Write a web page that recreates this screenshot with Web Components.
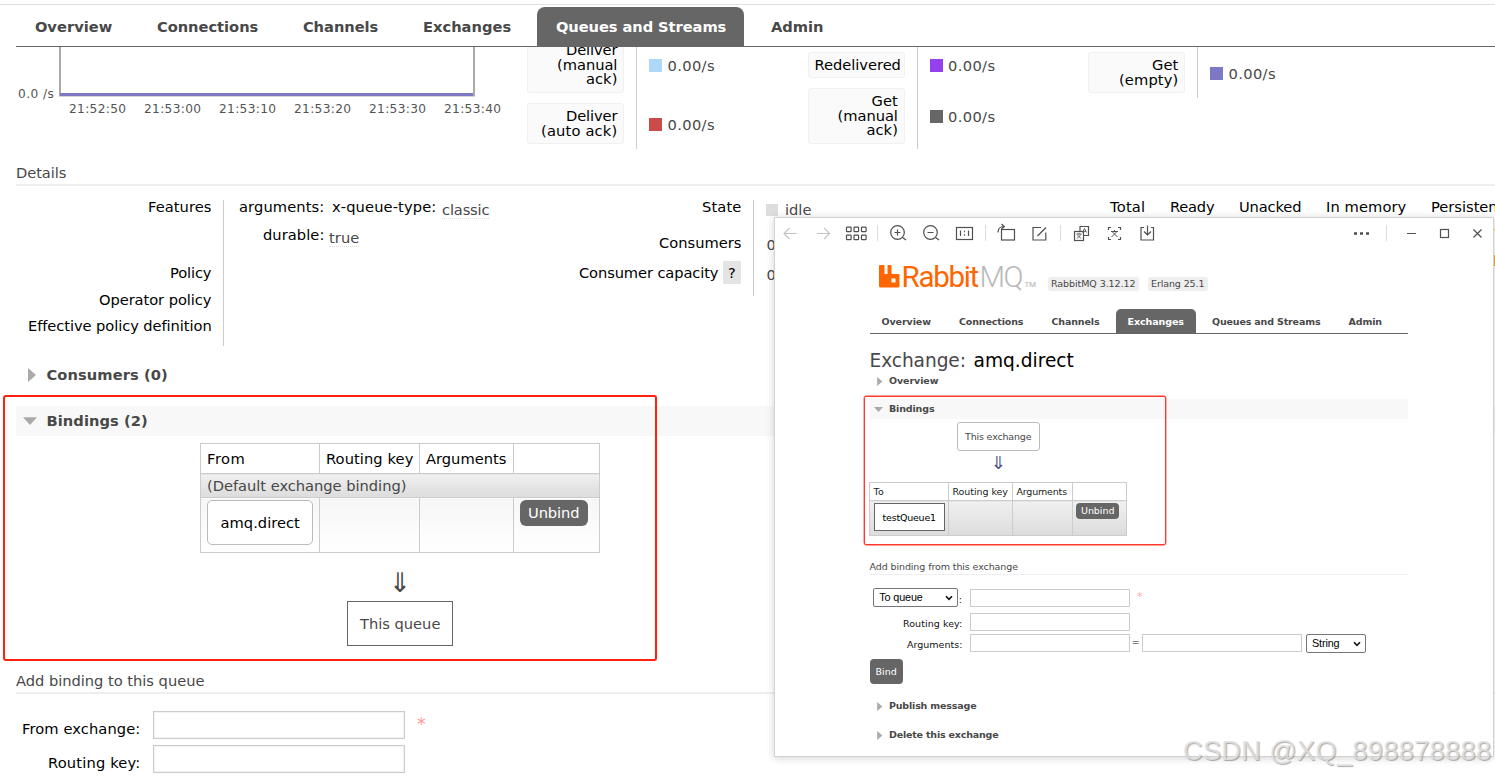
<!DOCTYPE html>
<html lang="en">
<head>
<meta charset="utf-8">
<title>RabbitMQ Management</title>
<style>
    html, body {
        margin: 0;
        height: 777px;
        overflow: hidden;
        background: #fff;
    }

    body {
        position: relative;
        font-family: "DejaVu Sans", Verdana, sans-serif;
        color: #484848;
    }
</style>
</head>
<body>
<queue-page></queue-page>
<image-viewer></image-viewer>
<water-mark></water-mark>

<script>
class BaseElement extends HTMLElement {

    constructor() {
        super();

        this.attachShadow({mode: 'open'});
    }

    connectedCallback() {
        this.render();
    }

    render() {
        this.shadowRoot.innerHTML = `<style>${this.css}</style>${this.template}`;
    }
}

// One line of text, tracked so that it takes exactly "w" pixels
class FitText extends BaseElement {

    get css() {
        return `
            :host {
                display: inline-block;
                white-space: nowrap;
                flex: none;
            }
        `;
    }

    get template() {
        return `<slot></slot>`;
    }

    render() {
        super.render();
        const want = parseFloat(this.getAttribute('w'));
        const count = this.textContent.length;
        if (!want || !count) {
            return;
        }
        const range = document.createRange();
        range.selectNodeContents(this);
        const have = range.getBoundingClientRect().width;
        this.style.letterSpacing = `${(want + .4 - have) / count}px`;
        this.style.width = `${want}px`;
    }
}

class NavTabs extends BaseElement {

    get css() {
        return `
            :host {
                display: flex;
                align-items: flex-end;
                gap: var(--tab-gap, 8px);
                box-sizing: border-box;
                border-bottom: 1px solid #666;
            }
        `;
    }

    get template() {
        return `<slot></slot>`;
    }
}

class NavTab extends BaseElement {

    get css() {
        return `
            :host {
                display: block;
                height: var(--tab-height, 39px);
                line-height: var(--tab-line, 40px);
                padding: 0 var(--tab-pad, 18.5px);
                font-weight: bold;
                border-radius: var(--tab-radius, 8px) var(--tab-radius, 8px) 0 0;
            }

            :host([active]) {
                background: #666;
                color: #fff;
            }
        `;
    }

    get template() {
        return `<fit-text w="${this.getAttribute('w')}">${this.getAttribute('label')}</fit-text>`;
    }
}

class SectionTitle extends BaseElement {

    get css() {
        return `
            :host {
                display: block;
                box-sizing: border-box;
                height: var(--title-height, 28px);
                line-height: var(--title-line, 29px);
                border-bottom: var(--title-border, 2px) solid #eee;
            }
        `;
    }

    get template() {
        return `<slot></slot>`;
    }
}

class FoldTitle extends BaseElement {

    get css() {
        return `
            :host {
                display: flex;
                align-items: center;
                height: var(--fold-height, 30px);
                line-height: var(--fold-height, 30px);
                font-weight: bold;
            }

            :host([open]) {
                background: #f8f8f8;
            }

            .mark {
                flex: none;
                box-sizing: border-box;
                display: flex;
                justify-content: center;
                width: var(--fold-mark, 30.5px);
                padding-right: 2px;
            }

            svg {
                flex: none;
                height: var(--fold-arrow, 14px);
                width: var(--fold-arrow, 14px);
            }
        `;
    }

    get template() {
        const shape = this.hasAttribute('open') ? 'M0 3.2H14L7 11Z' : 'M5 0L13 7L5 14Z';
        return `
        <span class="mark"><svg viewBox="0 0 14 14"><path d="${shape}" fill="#aaa"/></svg></span>
        <slot></slot>
        `;
    }
}

class RateRow extends BaseElement {

    get css() {
        return `
            :host {
                display: flex;
            }

            .label {
                flex: none;
                display: flex;
                align-items: center;
                width: 97px;
                padding-right: 12px;
                border-right: 1px solid #ccc;
            }

            .box {
                box-sizing: border-box;
                width: 97px;
                padding: 5px 6px;
                border: 1px solid #f0f0f0;
                border-radius: 3px;
                background: #fafafa;
                color: #000;
                text-align: right;
                line-height: 14.6px;
            }

            .value {
                display: flex;
                align-items: center;
                gap: 5.5px;
                padding: 1px 0 0 12px;
            }

            i {
                width: 13px;
                height: 13px;
                background: ${this.getAttribute('color')};
            }
        `;
    }

    get template() {
        return `
        <div class="label"><div class="box"><slot></slot></div></div>
        <div class="value"><i></i><fit-text w="47">0.00/s</fit-text></div>
        `;
    }
}

class NodeBox extends BaseElement {

    get css() {
        return `
            :host {
                display: flex;
                align-items: center;
                justify-content: center;
                box-sizing: border-box;
                width: var(--node-w, 106px);
                height: var(--node-h, 45px);
                border: 1px solid #666;
                background: #fff;
            }

            :host([exchange]) {
                border-color: #bbb;
                border-radius: var(--node-radius, 5px);
            }
        `;
    }

    get template() {
        return `<slot></slot>`;
    }
}

class DarkButton extends BaseElement {

    get css() {
        return `
            :host {
                display: flex;
                align-items: center;
                justify-content: center;
                box-sizing: border-box;
                padding-bottom: 1px;
                border-radius: var(--btn-radius, 6px);
                background: #666;
                color: #fff;
            }
        `;
    }

    get template() {
        return `<slot></slot>`;
    }
}

class RateChart extends BaseElement {

    get css() {
        return `
            :host {
                display: block;
                width: 511px;
                flex: none;
                font-size: 12.2px;
                color: #545454;
            }

            .plot {
                display: flex;
                height: 50px;
            }

            .axis {
                width: 38px;
                padding: 40px 0 0 2px;
                line-height: 15px;
                margin-right: 2px;
            }

            .times {
                display: flex;
                justify-content: space-between;
                width: 432px;
                margin: 4px 0 0 53px;
                line-height: 16px;
            }
        `;
    }

    get template() {
        const times = ['21:52:50', '21:53:00', '21:53:10', '21:53:20', '21:53:30', '21:53:40'];
        return `
        <div class="plot">
            <div class="axis"><fit-text w="36">0.0 /s</fit-text></div>
            <svg width="418" height="50">
                <path d="M2 0V48.5H416V0" fill="none" stroke="#aaa" stroke-width="2"/>
                <path d="M2 47.5H415" stroke="#7c78c4" stroke-width="3"/>
            </svg>
        </div>
        <div class="times">${times.map(t => `<fit-text w="57">${t}</fit-text>`).join('')}</div>
        `;
    }
}

class QueuePage extends BaseElement {

    get css() {
        return `
            :host {
                display: block;
                width: 1495px;
                height: 777px;
                overflow: hidden;
                font-size: 14.67px;
            }

            header {
                margin-top: 4px;
                border-top: 1px solid #e0e0e0;
                padding-left: 16px;
            }

            nav-tabs {
                height: 42px;
                padding-left: .4px;
            }

            main {
                padding-left: 16px;
            }

            .stats {
                display: flex;
                height: 111px;
                overflow: hidden;
            }

            .rates {
                flex: none;
                width: 280.5px;
            }

            .details {
                display: flex;
                height: 160px;
                padding-top: 14px;
                overflow: hidden;
                color: #000;
            }

            .labels {
                box-sizing: border-box;
                flex: none;
                border-right: 1px solid #ccc;
                padding-right: 12px;
                display: grid;
                justify-items: end;
                align-content: start;
            }

            .policy {
                width: 208px;
                height: 146px;
                grid-template-rows: 59px 27px 26px 27px;
                line-height: 27px;
            }

            .policy > :first-child {
                line-height: 13px;
            }

            .features {
                box-sizing: border-box;
                width: 276px;
                flex: none;
                display: grid;
                grid-template-columns: 85px auto;
                grid-template-rows: 20px 20px;
                gap: 8px 5px;
                padding-left: 15px;
                margin-top: -3px;
                line-height: 20px;
                align-content: start;
                justify-content: start;
            }

            .features > :nth-child(odd) {
                justify-self: end;
            }

            .args {
                display: flex;
                gap: 6px;
                margin-left: 3px;
            }

            abbr {
                display: block;
                height: 18px;
                margin-top: 2.5px;
                border-bottom: 1px dotted #ddd;
                color: #484848;
            }

            .state {
                width: 254px;
                height: 96px;
                grid-template-rows: 13px 59px 0;
                line-height: 13px;
            }

            .state > :nth-child(2) {
                margin-top: 23px;
            }

            .capacity {
                display: flex;
                align-items: center;
                gap: 5px;
                margin-top: -11px;
                height: 23px;
            }

            .help {
                width: 18px;
                height: 23px;
                line-height: 23px;
                text-align: center;
                background: #e4e4e4;
            }

            .facts {
                flex: none;
                width: 356px;
                box-sizing: border-box;
                padding-left: 12px;
                color: #484848;
                line-height: 20px;
            }

            .idle {
                display: flex;
                align-items: center;
                gap: 7px;
                height: 20px;
            }

            .idle i {
                width: 12px;
                height: 12px;
                background: #ddd;
            }

            .facts p {
                margin: 15px 0 0 .5px;
            }

            .facts p + p {
                margin-top: 10px;
            }

            .counts {
                flex: none;
                display: flex;
                gap: 25px;
                line-height: 13px;
            }

            .last i {
                display: block;
                width: 80px;
                height: 3px;
                margin-top: 15px;
                background: #fae3a0;
            }

            .last i + i {
                height: 11px;
                margin-top: 24px;
                background: #e3a857;
            }

            .bindings {
                display: flex;
                flex-direction: column;
                align-items: center;
                width: 400px;
                margin: 7px 0 0 184px;
                height: 203px;
            }

            table {
                width: 400px;
                table-layout: fixed;
                border-collapse: collapse;
            }

            td, th {
                padding: 0 6px;
                border: 1px solid #ccc;
                text-align: left;
                font-weight: normal;
                vertical-align: middle;
            }

            th {
                height: 29px;
                color: #000;
            }

            .default td {
                height: 23px;
                line-height: 23px;
                background: linear-gradient(#f0f0f0, #dcdcdc);
            }

            .bound td {
                height: 52px;
                padding-top: 2px;
                vertical-align: top;
                background: linear-gradient(#f6f6f6, #fff);
            }

            .bound node-box {
                color: #000;
            }

            .bound dark-button {
                width: 68px;
                height: 26px;
            }

            .down {
                height: 48px;
                line-height: 60px;
                font-size: 27px;
            }

            .add {
                display: block;
                margin-top: 20px;
            }

            form {
                display: grid;
                grid-template-columns: 124px 252px auto;
                grid-auto-rows: 28px;
                column-gap: 13px;
                row-gap: 6px;
                margin-top: 17px;
                line-height: 35px;
                color: #000;
            }

            form > :nth-child(3n + 1) {
                justify-self: end;
            }

            input {
                box-sizing: border-box;
                width: 252px;
                height: 28px;
                border: 1px solid #ccc;
                outline: 0;
                box-shadow: inset 0 0 0 1px #f2f2f2;
            }

            .must {
                color: #f99;
                font-size: 17.5px;
                margin-left: -1px;
                line-height: 27px;
            }

            .ring {
                position: absolute;
                left: 3px;
                top: 395px;
                width: 650px;
                height: 262px;
                border: 2px solid #ff2010;
                border-radius: 3px;
            }
        `;
    }

    get template() {
        return `
        <header>
            <nav-tabs>
                <nav-tab label="Overview" w="77"></nav-tab>
                <nav-tab label="Connections" w="101"></nav-tab>
                <nav-tab label="Channels" w="75"></nav-tab>
                <nav-tab label="Exchanges" w="88"></nav-tab>
                <nav-tab label="Queues and Streams" w="170" active></nav-tab>
                <nav-tab label="Admin" w="52"></nav-tab>
            </nav-tabs>
        </header>
        <main>
            <div class="stats">
                <rate-chart></rate-chart>
                <div class="rates" style="margin-top:-15px">
                    <rate-row color="#aed8f8" style="height:66px"><fit-text w="51">Deliver</fit-text><br><fit-text w="60">(manual</fit-text><br><fit-text w="31">ack)</fit-text></rate-row>
                    <rate-row color="#cb4b4b" style="height:51px"><fit-text w="51">Deliver</fit-text><br><fit-text w="76">(auto ack)</fit-text></rate-row>
                </div>
                <div class="rates">
                    <rate-row color="#9440ed" style="height:36px"><fit-text w="86">Redelivered</fit-text></rate-row>
                    <rate-row color="#666" style="height:66px"><fit-text w="26">Get</fit-text><br><fit-text w="60">(manual</fit-text><br><fit-text w="31">ack)</fit-text></rate-row>
                </div>
                <div class="rates">
                    <rate-row color="#7c78c4" style="height:51px"><fit-text w="26">Get</fit-text><br><fit-text w="59">(empty)</fit-text></rate-row>
                </div>
            </div>
            <section-title><fit-text w="50">Details</fit-text></section-title>
            <div class="details">
                <div class="labels policy">
                    <fit-text w="63">Features</fit-text>
                    <fit-text w="41">Policy</fit-text>
                    <fit-text w="112">Operator policy</fit-text>
                    <fit-text w="183">Effective policy definition</fit-text>
                </div>
                <div class="features">
                    <fit-text w="85">arguments:</fit-text>
                    <div class="args"><fit-text w="104">x-queue-type:</fit-text><abbr><fit-text w="47">classic</fit-text></abbr></div>
                    <fit-text w="61">durable:</fit-text>
                    <abbr style="justify-self:start"><fit-text w="30">true</fit-text></abbr>
                </div>
                <div class="labels state">
                    <fit-text w="39">State</fit-text>
                    <fit-text w="82">Consumers</fit-text>
                    <div class="capacity"><fit-text w="139">Consumer capacity</fit-text><span class="help">?</span></div>
                </div>
                <div class="facts">
                    <div class="idle"><i></i><fit-text w="26">idle</fit-text></div>
                    <p>0</p>
                    <p>0</p>
                </div>
                <div class="counts">
                    <fit-text w="35">Total</fit-text>
                    <fit-text w="44">Ready</fit-text>
                    <fit-text w="62">Unacked</fit-text>
                    <fit-text w="80">In memory</fit-text>
                    <div class="last"><fit-text w="72">Persistent</fit-text><i></i><i></i></div>
                </div>
            </div>
            <fold-title><fit-text w="121">Consumers (0)</fit-text></fold-title>
            <fold-title open style="margin-top:16px"><fit-text w="101">Bindings (2)</fit-text></fold-title>
            <div class="bindings">
                <table>
                    <colgroup><col style="width:119px"><col style="width:100px"><col style="width:93.5px"><col></colgroup>
                    <tr><th><fit-text w="38">From</fit-text></th><th><fit-text w="87">Routing key</fit-text></th><th><fit-text w="80">Arguments</fit-text></th><th></th></tr>
                    <tr class="default"><td colspan="4"><fit-text w="199">(Default exchange binding)</fit-text></td></tr>
                    <tr class="bound">
                        <td><node-box exchange><fit-text w="79">amq.direct</fit-text></node-box></td>
                        <td></td>
                        <td></td>
                        <td><dark-button><fit-text w="51">Unbind</fit-text></dark-button></td>
                    </tr>
                </table>
                <div class="down">⇓</div>
                <node-box><fit-text w="80">This queue</fit-text></node-box>
            </div>
            <section-title class="add"><fit-text w="188">Add binding to this queue</fit-text></section-title>
            <form>
                <fit-text w="118">From exchange:</fit-text><input><span class="must">*</span>
                <fit-text w="92">Routing key:</fit-text><input><span></span>
            </form>
        </main>
        <div class="ring"></div>
        `;
    }
}

class ViewerToolbar extends BaseElement {

    get css() {
        return `
            :host {
                display: flex;
                height: 30px;
            }

            svg {
                flex: none;
                width: 33px;
                height: 30px;
                fill: none;
                stroke: #505050;
                stroke-width: 1.2;
            }

            .off {
                stroke: #c4c4c4;
            }

            hr {
                flex: none;
                width: 1px;
                height: 16px;
                margin: 7px 4px;
                border: 0;
                background: #ddd;
            }

            .fill {
                flex: 1;
            }
        `;
    }

    // Every glyph is centred on 16.5,15 in its 33x30 cell
    icon(body, name = '') {
        return `<svg class="${name}" viewBox="0 0 33 30">${body}</svg>`;
    }

    get template() {
        const cells = [9.5, 17, 24.5].map(x => [9.5, 17.5].map(y => `<rect x="${x - 3}" y="${y - .4}" width="4.6" height="4.6" rx=".6"/>`).join('')).join('');
        return [
            this.icon('<path d="M22.500 15.500H10M15.500 10L10 15.500L15.500 21"/>', 'off'),
            this.icon('<path d="M10 15.500H22.500M17 10L22.500 15.500L17 21"/>', 'off'),
            this.icon(cells),
            '<hr>',
            this.icon('<circle cx="15.500" cy="14.500" r="6.800"/><path d="M12.500 14.500H18.500M15.500 11.500V17.500M20.500 19.500L24 22"/>'),
            this.icon('<circle cx="15.500" cy="14.500" r="6.800"/><path d="M12.500 14.500H18.500M20.500 19.500L24 22"/>'),
            this.icon('<rect x="8.500" y="9.500" width="16" height="12"/><path d="M12.500 12.500V18M20.500 12.500V18M16.500 12.800V14.300M16.500 16.300V17.800"/>'),
            '<hr>',
            this.icon('<rect x="11.500" y="11.500" width="13" height="10.500"/><path d="M8 14.500C8 11 10 8.500 14 8.500M11.500 6L14.300 8.500L11.500 11"/>'),
            this.icon('<path d="M18 9.500H10V22H22.800V14.500M14.500 18L23 9.500"/>'),
            '<hr>',
            this.icon('<path d="M15 13V8.500H23.500V17.500H19"/><rect x="9.500" y="13.500" width="9" height="9"/><path stroke-width=".9" d="M11.500 16H16.500M14 14.800V16M12 20.500L16 16.500M12 16.500L16 20.500M17.500 14.500L19.500 10.500L21.500 14.500M18.200 13.300H20.800"/>'),
            this.icon('<path d="M10.500 12V9.500H13M20 9.500H22.500V12M22.500 19V21.500H20M13 21.500H10.500V19"/><path stroke-width="1" d="M13 13.500H20M16.500 12V13.500M13.500 19L18.500 14M14.500 14L19.500 19"/>'),
            this.icon('<path d="M13 9.500H10V22H22.500V9.500H20M16.500 7.500V17M13 13.500L16.500 17L20 13.500"/>'),
            '<span class="fill"></span>',
            this.icon('<path d="M9 15.500H12M15 15.500H18M21 15.500H24" stroke-width="2.600"/>'),
            '<hr style="margin:7px 8px">',
            this.icon('<path d="M12 15.500H21" stroke-width="1"/>'),
            this.icon('<rect x="12.500" y="11.500" width="8" height="8"/>'),
            this.icon('<path d="M12.500 11.500L20.500 19.500M20.500 11.500L12.500 19.500"/>')
        ].join('');
    }
}

class ImageViewer extends BaseElement {

    get css() {
        return `
            :host {
                position: absolute;
                left: 774px;
                top: 217px;
                box-sizing: border-box;
                width: 720px;
                height: 540px;
                border: 1px solid #d2d2d2;
                background: #fff;
                box-shadow: 0 1px 8px rgba(0, 0, 0, .18);
                font-size: 9.5px;
                --tab-gap: 4.5px;
                --tab-height: 24px;
                --tab-line: 25px;
                --tab-pad: 12px;
                --tab-radius: 5px;
                --title-height: 17px;
                --title-line: 17px;
                --title-border: 1px;
                --fold-height: 20px;
                --fold-mark: 19.5px;
                --fold-arrow: 9px;
                --node-w: 71px;
                --node-h: 28px;
                --node-radius: 3px;
                --btn-radius: 4px;
            }

            viewer-toolbar {
                margin: 0 -1px;
            }

            article {
                width: 538.5px;
                margin-left: 94.5px;
            }

            .brand {
                display: flex;
                height: 60px;
                padding: 17px 0 0 9px;
                box-sizing: border-box;
            }

            .name {
                margin-left: 2px;
                line-height: 24px;
                font-family: Roboto, sans-serif;
                font-size: 29.5px;
                color: #f60;
                white-space: nowrap;
            }

            .mq {
                color: #b8b8b8;
                margin-left: 2px;
                font-weight: 300;
            }

            .tm {
                align-self: flex-start;
                margin: 15px 12px 0 3px;
                font: 8px/10px Roboto, sans-serif;
                color: #b0b0b0;
            }

            .badge {
                height: 14px;
                line-height: 14px;
                margin: 12px 9px 0 0;
                padding: 0 3.5px;
                border-radius: 3px;
                background: #eee;
            }

            nav-tabs {
                height: 26px;
            }

            h1 {
                display: flex;
                gap: 8px;
                margin: 13px 0 0;
                font-size: 18.6px;
                font-weight: normal;
                line-height: 27px;
            }

            h1 b {
                font-weight: normal;
                color: #000;
            }

            .bindings {
                display: flex;
                flex-direction: column;
                align-items: center;
                width: 257px;
                height: 136px;
                padding-top: 3px;
            }

            .this {
                --node-w: 83px;
                --node-h: 29px;
            }

            .down {
                height: 31px;
                line-height: 24px;
                font-size: 18px;
                color: #4c4c80;
            }

            table {
                width: 258px;
                table-layout: fixed;
                border-collapse: collapse;
            }

            td, th {
                padding: 0 3.5px;
                border: 1px solid #ccc;
                text-align: left;
                font-weight: normal;
            }

            th {
                height: 17px;
                color: #222;
            }

            td {
                height: 32px;
                padding-top: 2px;
                vertical-align: top;
                background: linear-gradient(#f0f0f0, #dcdcdc);
                color: #000;
            }

            td dark-button {
                width: 43px;
                height: 16px;
                margin-left: -.5px;
            }

            .row {
                display: flex;
                height: 18px;
                line-height: 21px;
                color: #111;
            }

            .key {
                box-sizing: border-box;
                width: 100px;
                padding-right: 7.500px;
                display: flex;
                justify-content: flex-end;
            }

            input {
                box-sizing: border-box;
                width: 160px;
                height: 18px;
                border: 1px solid #ccc;
            }

            .pick {
                box-sizing: border-box;
                display: flex;
                align-items: center;
                justify-content: space-between;
                height: 19px;
                line-height: 17px;
                padding: 0 4px 0 5px;
                border: 1px solid #767676;
                border-radius: 2px;
                font-family: "Liberation Sans", sans-serif;
                font-size: 10.800px;
                color: #000;
            }

            .key .pick {
                margin: -1px .5px 0 0;
            }

            .pick svg {
                width: 8px;
                height: 6px;
            }

            .bind {
                width: 33px;
                height: 25px;
                margin: 7px 0 12px;
            }

            .ring {
                position: absolute;
                left: 89px;
                top: 178px;
                width: 300px;
                height: 147px;
                border: 1px solid #ff3a2c;
                border-radius: 2px;
                box-shadow: 0 0 0 .4px #ff3a2c;
            }
        `;
    }

    get template() {
        const chevron = '<svg viewBox="0 0 8 6"><path d="M1 1.2L4 4.400L7 1.200" fill="none" stroke="#111" stroke-width="1.600"/></svg>';
        return `
        <viewer-toolbar></viewer-toolbar>
        <article>
            <div class="brand">
                <svg width="21" height="23" viewBox="0 0 21 23"><path fill="#f60" fill-rule="evenodd" d="M1 0H4.500Q5.500 0 5.500 1V9H8.500V1Q8.500 0 9.500 0H11.500Q12.500 0 12.500 1V8Q12.500 9 13.500 9H19Q20.500 9 20.500 10V21Q20.500 22.500 19 22.500H1.500Q0 22.500 0 21V1Q0 0 1 0ZM12.500 13.500V17.500H16.500V13.500Z"/></svg>
                <div class="name"><fit-text w="76">Rabbit</fit-text></div>
                <div class="name mq"><fit-text w="42">MQ</fit-text></div>
                <div class="tm"><fit-text w="11">TM</fit-text></div>
                <div class="badge"><fit-text w="84">RabbitMQ 3.12.12</fit-text></div>
                <div class="badge"><fit-text w="53">Erlang 25.1</fit-text></div>
            </div>
            <nav-tabs>
                <nav-tab label="Overview" w="49"></nav-tab>
                <nav-tab label="Connections" w="64"></nav-tab>
                <nav-tab label="Channels" w="47.5"></nav-tab>
                <nav-tab label="Exchanges" w="56" active></nav-tab>
                <nav-tab label="Queues and Streams" w="108"></nav-tab>
                <nav-tab label="Admin" w="33"></nav-tab>
            </nav-tabs>
            <h1><fit-text w="96">Exchange:</fit-text><b><fit-text w="100">amq.direct</fit-text></b></h1>
            <fold-title style="margin-top:-3px"><fit-text w="49">Overview</fit-text></fold-title>
            <fold-title open style="margin-top:8px"><fit-text w="45">Bindings</fit-text></fold-title>
            <div class="bindings">
                <node-box class="this" exchange><fit-text w="66">This exchange</fit-text></node-box>
                <div class="down">⇓</div>
                <table>
                    <colgroup><col style="width:79px"><col style="width:64px"><col style="width:60px"><col></colgroup>
                    <tr><th><fit-text w="10">To</fit-text></th><th><fit-text w="55">Routing key</fit-text></th><th><fit-text w="50">Arguments</fit-text></th><th></th></tr>
                    <tr>
                        <td><node-box><fit-text w="53">testQueue1</fit-text></node-box></td>
                        <td></td>
                        <td></td>
                        <td><dark-button><fit-text w="33">Unbind</fit-text></dark-button></td>
                    </tr>
                </table>
            </div>
            <section-title><fit-text w="148">Add binding from this exchange</fit-text></section-title>
            <div class="row" style="margin-top:14px">
                <div class="key"><div class="pick" style="width:85px"><fit-text w="43">To queue</fit-text>${chevron}</div>:</div>
                <input><span style="margin-left:7.500px;line-height:15px;font-size:11px;color:#faa">*</span>
            </div>
            <div class="row" style="margin-top:6px"><div class="key"><fit-text w="59">Routing key:</fit-text></div><input></div>
            <div class="row" style="margin-top:3px">
                <div class="key"><fit-text w="55">Arguments:</fit-text></div>
                <input><span style="width:12.500px;text-align:center;line-height:16px">=</span><input>
                <div class="pick" style="width:60px;margin-left:4px"><fit-text w="27">String</fit-text>${chevron}</div>
            </div>
            <dark-button class="bind"><fit-text w="21">Bind</fit-text></dark-button>
            <fold-title><fit-text w="87">Publish message</fit-text></fold-title>
            <fold-title style="margin-top:9px"><fit-text w="109">Delete this exchange</fit-text></fold-title>
        </article>
        <div class="ring"></div>
        `;
    }
}

class WaterMark extends BaseElement {

    get css() {
        return `
            :host {
                position: absolute;
                left: 1183px;
                top: 735px;
                font: 27px/32px "Liberation Sans", Arial, sans-serif;
                color: rgba(226, 226, 226, .85);
                text-shadow: 1px 1px 1px rgba(90, 90, 90, .5);
            }
        `;
    }

    get template() {
        return `<fit-text w="308">CSDN @XQ_898878888</fit-text>`;
    }
}

customElements.define('fit-text', FitText);
customElements.define('nav-tabs', NavTabs);
customElements.define('nav-tab', NavTab);
customElements.define('section-title', SectionTitle);
customElements.define('fold-title', FoldTitle);
customElements.define('rate-row', RateRow);
customElements.define('node-box', NodeBox);
customElements.define('dark-button', DarkButton);
customElements.define('rate-chart', RateChart);
customElements.define('viewer-toolbar', ViewerToolbar);
customElements.define('queue-page', QueuePage);
customElements.define('image-viewer', ImageViewer);
customElements.define('water-mark', WaterMark);
</script>
</body>
</html>
